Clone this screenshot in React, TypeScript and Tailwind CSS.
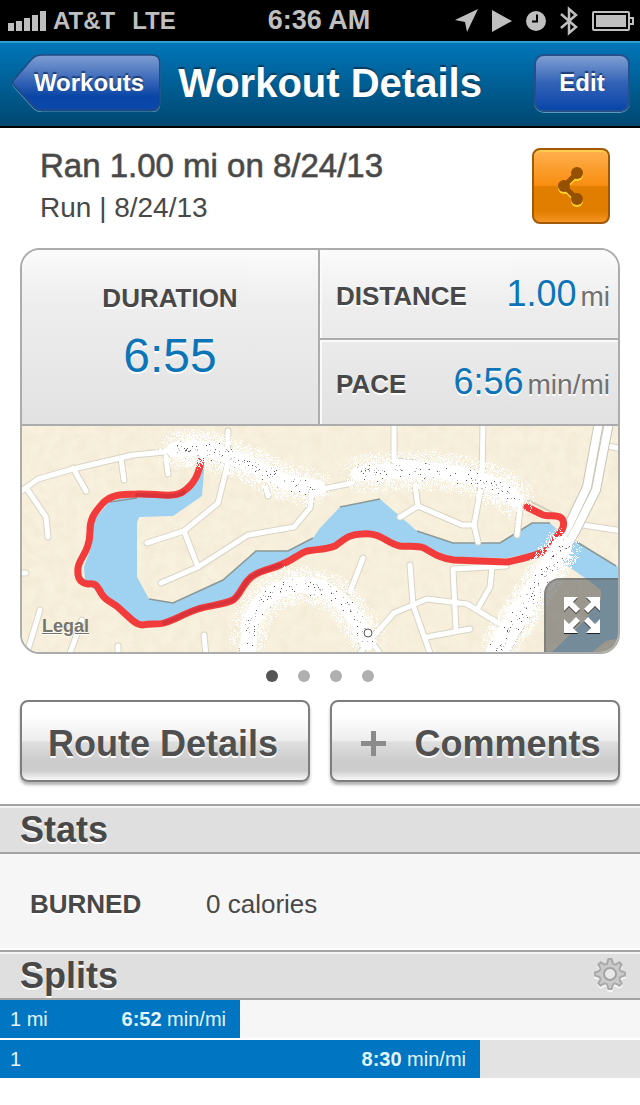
import React from "react";

type Point = [number, number];

function seededRandom(seed: number) {
  let s = seed;
  return () => {
    s = (s * 1664525 + 1013904223) % 4294967296;
    return s / 4294967296;
  };
}

/** Scatters specks around a polyline; density fades with distance, up to `spread`. */
function scatter(points: Point[], spread: number, count: number, seed: number) {
  const rand = seededRandom(seed);
  let d = "";
  for (let i = 0; i < count; i++) {
    const t = rand() * (points.length - 1);
    const k = Math.floor(t);
    const f = t - k;
    const a = points[k];
    const b = points[k + 1];
    const angle = rand() * Math.PI * 2;
    const r = spread * rand();
    const x = Math.round(a[0] + (b[0] - a[0]) * f + Math.cos(angle) * r);
    const y = Math.round(a[1] + (b[1] - a[1]) * f + Math.sin(angle) * r);
    d += `M${x} ${y}h1v1h-1z`;
  }
  return d;
}

const smears: { points: Point[]; core: number; spread: number }[] = [
  { points: [[174, 450], [190, 448], [210, 450], [230, 457], [250, 464], [270, 475], [290, 483], [318, 488]], core: 15, spread: 20 },
  { points: [[358, 474], [376, 472], [398, 471], [420, 470], [442, 471], [464, 475], [486, 481], [504, 490], [516, 500]], core: 15, spread: 21 },
  { points: [[248, 650], [249, 626], [258, 606], [272, 593], [290, 585], [310, 585], [330, 592], [346, 606], [358, 622], [368, 642]], core: 16, spread: 20 },
  { points: [[562, 546], [553, 560], [543, 577], [532, 594], [521, 611], [510, 628], [496, 650]], core: 20, spread: 20 },
];

const roads = [
  "M20 492L38 479L73 469L133 455L165 452",
  "M73 468L86 491",
  "M121 459L124 480",
  "M166 457L168 474",
  "M27 489L46 517L48 537",
  "M228 431L227 467L218 503L184 531L147 543",
  "M184 531L198 567",
  "M161 583L198 567L248 535L294 527L310 508L312 492",
  "M266 488L268 496",
  "M40 610L26 656",
  "M82 620L69 656",
  "M118 646V656",
  "M204 635L206 656",
  "M20 573H26",
  "M394 424V461L417 463",
  "M483 424L482 477L480 493L474 525L478 542",
  "M474 525H462L418 506L400 517",
  "M418 506L415 485",
  "M318 490L352 483",
  "M520 508L517 535",
  "M608 446L622 449",
  "M583 525L622 531",
  "M363 558L350 592",
  "M410 565L413 605L431 656",
  "M382 656L370 640L394 613L427 599L467 604L500 624",
  "M506 566L453 569L456 630",
  "M492 567L490 587L478 608",
  "M427 637L470 629",
  "M370 640L358 656",
];

const highway = ["M599 422L587 487L568 527L490 656", "M609 422L596 490L576 530L502 656"];

const water =
  "M205 459L202 496L173 516L139 517L137 523V577L149 599L173 603L223 580L256 551H288L313 538L320 528L340 507L380 499L417 531L453 543H500L532 523H550L560 532L577 542L620 568V638L606 641L590 654H550L583 622L601 600V590L585 578L562 562L545 550L507 558L453 557L422 547L400 546L380 534H357L335 547L307 551L277 566L255 575L233 600L193 611L163 624L140 625L118 607L105 598L85 582L84 567L91 547L94 520L110 501L137 495L170 496L186 490L199 472Z";

const route =
  "M201 460C199 475 194 484 184 491C174 499 155 493 137 494C118 494 110 496 103 503C93 514 90 520 90 531C90 552 79 558 78 568C77 578 80 583 88 584C97 583 97 586 101 593C106 602 113 602 120 609C130 618 136 625 143 625C150 623 157 625 164 623C175 620 185 613 198 609C210 605 223 605 233 600C242 594 243 580 256 574C265 569 272 569 280 565C292 561 298 554 307 551C317 549 325 550 335 546C345 539 349 534 362 534C381 532 386 543 400 546C409 547 416 545 424 548C434 554 442 559 454 560L507 562C520 559 532 557 543 552C552 549 554 539 559 534C566 526 565 517 556 516C550 515 545 517 541 514L527 507";

function RouteMap() {
  return (
    <svg
      viewBox="22 426 596 226"
      preserveAspectRatio="xMidYMid slice"
      className="block h-[226px] w-full bg-[#f7f0dc]"
      role="img"
      aria-label="Map of the route"
    >
      <defs>
        <filter id="paper" x="0" y="0" width="100%" height="100%">
          <feTurbulence type="fractalNoise" baseFrequency="0.09" numOctaves="3" seed="4" />
          <feColorMatrix values="0 0 0 0 0.6  0 0 0 0 0.5  0 0 0 0 0.3  0 0 0 0.5 -0.16" />
        </filter>
      </defs>
      <rect x="22" y="426" width="596" height="226" fill="#f8f1de" />
      <rect x="22" y="426" width="596" height="226" filter="url(#paper)" opacity="0.4" />
      <path d={water} fill="#9fd2f1" />
      <path
        d="M149 599L173 603L223 580L256 551H288L313 538M340 507L380 499M417 531L453 543H500L532 523H550M577 542L616 566M110 502L137 498"
        fill="none"
        stroke="#8b9896"
        strokeWidth="1.5"
      />
      <g fill="none" strokeLinecap="round" strokeLinejoin="round">
        <g stroke="#d8d4c4" strokeWidth="7">
          {roads.map((d) => <path key={d} d={d} />)}
        </g>
        <g stroke="#ffffff" strokeWidth="5">
          {roads.map((d) => <path key={d} d={d} />)}
        </g>
        <g stroke="#c9c5b8" strokeWidth="10">
          {highway.map((d) => <path key={d} d={d} />)}
        </g>
        <g stroke="#ffffff" strokeWidth="8">
          {highway.map((d) => <path key={d} d={d} />)}
        </g>
        <path d="M528 500L563 518" stroke="#d3cfbf" strokeWidth="2" />
        <path d={route} stroke="#f23c3b" strokeWidth="7" />
        <path d="M137 495C155 494 174 500 184 492M164 623C175 620 185 613 198 609C210 605 223 605 233 600C242 594 243 580 256 574C265 569 272 569 280 565" stroke="#d8323a" strokeWidth="4" />
      </g>
      {smears.map((s, i) => (
        <g key={i}>
          <polyline
            points={s.points.map((p) => p.join(",")).join(" ")}
            fill="none"
            stroke="#ffffff"
            strokeWidth={s.core}
            strokeLinejoin="round"
            strokeLinecap="round"
          />
          <path d={scatter(s.points, s.spread, 6500, 11 + i)} fill="#ffffff" shapeRendering="crispEdges" />
          <path d={scatter(s.points, 10, 45, 71 + i)} fill="#5a5a5a" shapeRendering="crispEdges" />
          <path d={scatter(s.points, 10, 60, 91 + i)} fill="#b5b5b5" shapeRendering="crispEdges" />
        </g>
      ))}
      <circle cx="368" cy="633" r="4" fill="none" stroke="#555555" />
    </svg>
  );
}

function ExpandIcon() {
  const arrow = "0,0 14,0 9,5 16,12 12,16 5,9 0,14";
  const arrows = (
    <>
      <polygon points={arrow} />
      <polygon points={arrow} transform="translate(36 0) scale(-1 1)" />
      <polygon points={arrow} transform="translate(0 36) scale(1 -1)" />
      <polygon points={arrow} transform="translate(36 36) scale(-1 -1)" />
    </>
  );
  return (
    <svg viewBox="0 0 36 38" className="h-[38px] w-9" strokeLinejoin="round" aria-hidden="true">
      <g fill="#222222" transform="translate(0 1)">{arrows}</g>
      <g fill="#ffffff">{arrows}</g>
    </svg>
  );
}

function ShareShape() {
  return (
    <>
      <path d="M20 7L7 20L20 33" fill="none" strokeWidth="5" />
      <circle cx="20" cy="7" r="6" stroke="none" />
      <circle cx="7" cy="20" r="6" stroke="none" />
      <circle cx="20" cy="33" r="6" stroke="none" />
    </>
  );
}

function gearPath() {
  const c = 17;
  let d = "";
  for (let i = 0; i < 8; i++) {
    const base = (i * Math.PI) / 4 - Math.PI / 2;
    const at = (r: number, off: number) =>
      `${(c + r * Math.cos(base + off)).toFixed(2)} ${(c + r * Math.sin(base + off)).toFixed(2)}`;
    d += `${i === 0 ? "M" : "L"}${at(15, -0.11)}L${at(15, 0.11)}L${at(12.2, 0.2)}Q${at(9, 0.3927)} ${at(12.2, 0.5854)}`;
  }
  return d + "Z";
}

function GearIcon() {
  const d = gearPath();
  return (
    <svg viewBox="0 0 34 36" className="h-9 w-[34px]" strokeWidth="2" strokeLinejoin="round" aria-hidden="true">
      <path d={d} transform="translate(0 2)" fill="#f6f6f6" stroke="#f6f6f6" />
      <path d={d} fill="#cacaca" stroke="#a9a9a9" />
      <circle cx="17" cy="17" r="6" fill="#e8e8e8" stroke="#a3a3a3" />
    </svg>
  );
}

function StatusBar() {
  return (
    <div className="grid h-[41px] grid-cols-[1fr_auto_1fr] items-center bg-black pr-[6px] pl-2 text-[#bfbfbf]">
      <div className="flex items-center gap-[7px] text-[24px] font-bold">
        <svg viewBox="0 0 38 20" className="h-5 w-[38px]" fill="currentColor" aria-label="Signal strength">
          <path d="M0 12h6v8H0zM8 10h6v10H8zM16 7h6v13h-6zM24 4h6v16h-6zM32 0h6v20h-6z" />
        </svg>
        <span>AT&amp;T</span>
        <span className="ml-[10px]">LTE</span>
      </div>
      <div className="pr-1 text-[27px] font-bold">6:36 AM</div>
      <div className="flex items-center justify-end gap-[14px]">
        <svg viewBox="0 0 23 23" className="size-[23px]" fill="currentColor" aria-hidden="true">
          <path d="M23 0L12 23L10 13L0 11Z" />
        </svg>
        <svg viewBox="0 0 20 22" className="h-[22px] w-5" fill="currentColor" aria-hidden="true">
          <path d="M0 0L20 11L0 22Z" />
        </svg>
        <svg viewBox="0 0 20 20" className="size-5" aria-hidden="true">
          <circle cx="10" cy="10" r="10" fill="currentColor" />
          <path d="M11 3.500V10.500H6" fill="none" stroke="#000000" strokeWidth="2" />
        </svg>
        <svg viewBox="0 0 18 30" className="h-[30px] w-[18px]" fill="none" stroke="currentColor" strokeWidth="2.500" aria-hidden="true">
          <path d="M1 8L16 21L9 27V3L16 9L1 22" />
        </svg>
        <svg viewBox="0 0 42 20" className="h-5 w-[42px]" aria-label="Battery">
          <rect x="1" y="1" width="36" height="18" rx="1" fill="none" stroke="currentColor" strokeWidth="2" />
          <rect x="4" y="4" width="30" height="12" fill="currentColor" />
          <path d="M38 7h3v6h-3" fill="none" stroke="currentColor" strokeWidth="2" />
        </svg>
      </div>
    </div>
  );
}

function NavBar() {
  return (
    <header className="flex items-center justify-between border-t-2 border-b-2 border-t-[#2aa0cb] border-b-black bg-linear-to-b from-[#0076b8] to-[#004871] px-[10px] pt-[11px] pb-[14px] text-white">
      <button type="button" className="relative h-[58px] w-[152px] pl-[6px] text-[24px] font-bold [text-shadow:0_-2px_1px_#1c3c74]">
        <svg viewBox="0 0 152 59" className="absolute inset-0 h-full w-full" aria-hidden="true">
          <defs>
            <linearGradient id="back" x1="0" y1="0" x2="0" y2="1">
              <stop offset="0" stopColor="#7f9fd2" />
              <stop offset="0.5" stopColor="#3262b6" />
              <stop offset="0.75" stopColor="#0a46a6" />
              <stop offset="1" stopColor="#0a48ac" />
            </linearGradient>
          </defs>
          <path d="M25 2Q28 1 32 1H143Q151 1 151 9V50Q151 58 143 58H32Q26 58 23 55L3 33Q0 30 3 27L21 5Q23 3 25 2Z" fill="none" stroke="#5f97bd" strokeWidth="1" transform="translate(0 1)" />
          <path d="M25 2Q28 1 32 1H143Q151 1 151 9V49Q151 57 143 57H32Q26 57 23 54L3 32Q0 29 3 26L21 5Q23 3 25 2Z" fill="url(#back)" stroke="#234a82" strokeWidth="1.500" />
        </svg>
        <span className="relative">Workouts</span>
      </button>
      <h1 className="text-[40px] leading-[58px] font-bold [text-shadow:0_-2px_1px_#073c60]">Workout Details</h1>
      <button
        type="button"
        className="ml-9 h-[58px] w-[96px] rounded-[10px] border-2 border-[#26508c] bg-linear-to-b from-[#7f9fd2] via-[#3262b6] to-[#0646aa] text-[24px] font-bold shadow-[0_1px_0_#5f97bd] [text-shadow:0_-2px_1px_#1c3c74]"
      >
        Edit
      </button>
    </header>
  );
}

function SectionHeading({ title, children }: { title: string; children?: React.ReactNode }) {
  return (
    <div className="flex h-[50px] items-center justify-between border-y-2 border-[#a3a3a3] bg-[#dfdfdf] pr-[13px] pl-5 shadow-[inset_0_2px_0_#f4f4f4]">
      <h2 className="pt-[2px] text-[36px] leading-[44px] font-bold text-[#484848] [text-shadow:0_2px_0_#ffffff]">{title}</h2>
      {children}
    </div>
  );
}

function Metric({ label, value, unit }: { label: string; value: string; unit: string }) {
  return (
    <div className="flex items-center justify-between pr-2 pl-4 shadow-[inset_2px_2px_0_#fafafa] [text-shadow:0_2px_0_#ffffff]">
      <dt className="mt-1 text-[26px] font-bold">{label}</dt>
      <dd className="flex items-baseline gap-1">
        <span className="text-[36px] text-[#0d74b8]">{value}</span>
        <span className="text-[28px] text-[#707070]">{unit}</span>
      </dd>
    </div>
  );
}

const splits = [
  { label: "1 mi", pace: "6:52", share: 37.5 },
  { label: "1", pace: "8:30", share: 75 },
];

const actionButton =
  "flex h-[82px] items-center justify-center rounded-lg border-2 border-[#7e7e7e] bg-[linear-gradient(to_bottom,#ffffff_0%,#ffffff_18%,#ededed_50%,#dfdfdf_51%,#cccccc_75%,#cccccc_88%,#f2f2f2_98%)] pt-[6px] text-[36px] font-bold text-[#505050] shadow-[0_3px_3px_#b5b5b5] [text-shadow:0_2px_0_#ffffff]";

export default function App() {
  return (
    <div className="min-h-screen bg-white font-['Liberation_Sans',Arial,sans-serif] text-[#484848]">
      <StatusBar />
      <NavBar />
      <main>
        <section className="flex items-start justify-between pt-5 pr-[30px] pl-10">
          <div>
            <h2 className="text-[33px] leading-[36px] [-webkit-text-stroke:1px_#484848a0]">Ran 1.00 mi on 8/24/13</h2>
            <p className="mt-2 text-[28px] leading-[32px]">Run | 8/24/13</p>
          </div>
          <button
            type="button"
            aria-label="Share"
            className="flex h-[76px] w-[78px] items-center justify-center rounded-lg border-2 border-[#a05a08] bg-[linear-gradient(to_bottom,#ffb050_0%,#f88e10_49%,#e17e00_51%,#e17e00_85%,#f59422_100%)] pt-[2px] shadow-[inset_0_2px_0_#ffca4c]"
          >
            <svg viewBox="0 0 28 42" className="h-[42px] w-7" aria-hidden="true">
              <g transform="translate(0 2)" fill="#ffd22e" stroke="#ffd22e"><ShareShape /></g>
              <g fill="#955000" stroke="#955000"><ShareShape /></g>
            </svg>
          </button>
        </section>

        <section className="relative mx-5 mt-6 overflow-hidden rounded-[20px] border-2 border-[#acacac]">
          <dl className="grid h-44 grid-cols-2 border-b-2 border-[#acacac] bg-[linear-gradient(to_bottom,#fbfbfb,#eeeeee_30%,#e2e2e2)]">
            <div className="flex flex-col items-center border-r-2 border-[#acacac] pt-8 [text-shadow:0_2px_0_#ffffff]">
              <dt className="text-[26px] leading-8 font-bold">DURATION</dt>
              <dd className="mt-4 text-[48px] leading-[52px] text-[#0d74b8]">6:55</dd>
            </div>
            <div className="grid grid-rows-[90px_1fr] divide-y-2 divide-[#acacac]">
              <Metric label="DISTANCE" value="1.00" unit="mi" />
              <Metric label="PACE" value="6:56" unit="min/mi" />
            </div>
          </dl>
          <RouteMap />
          <a href="#legal" className="absolute bottom-[14px] left-5 text-[18px] leading-6 font-bold text-[#77756b] underline [text-shadow:0_1px_0_#ffffff]">
            Legal
          </a>
          <button
            type="button"
            aria-label="Expand map"
            className="absolute right-0 bottom-0 flex h-[74px] w-[74px] items-center justify-center rounded-tl-2xl border-t-2 border-l-2 border-[#5c5c5c]/40 bg-[#505050]/55"
          >
            <ExpandIcon />
          </button>
        </section>

        <nav className="flex justify-center gap-5 py-4" aria-label="Pages">
          <button type="button" aria-label="Page 1" className="size-3 rounded-full bg-[#555555]" />
          <button type="button" aria-label="Page 2" className="size-3 rounded-full bg-[#b0b0b0]" />
          <button type="button" aria-label="Page 3" className="size-3 rounded-full bg-[#b0b0b0]" />
          <button type="button" aria-label="Page 4" className="size-3 rounded-full bg-[#b0b0b0]" />
        </nav>

        <div className="mx-5 mt-[2px] mb-[22px] grid grid-cols-2 gap-5">
          <button type="button" className={`${actionButton} pr-1`}>Route Details</button>
          <button type="button" className={`${actionButton} gap-7 pl-3`}>
            <svg viewBox="0 0 25 25" className="mb-[2px] size-[25px]" aria-hidden="true">
              <path d="M12.500 0V25M0 12.500H25" stroke="#8b8b8b" strokeWidth="5" />
            </svg>
            <span>Comments</span>
          </button>
        </div>

        <SectionHeading title="Stats" />
        <dl className="flex h-24 items-center border-b-2 border-white bg-[#f6f6f6] pt-[6px] pl-[30px] text-[26px]">
          <dt className="w-44 font-bold [text-shadow:0_2px_0_#ffffff]">BURNED</dt>
          <dd>0 calories</dd>
        </dl>

        <SectionHeading title="Splits">
          <button type="button" aria-label="Split settings">
            <GearIcon />
          </button>
        </SectionHeading>
        <ul className="flex flex-col gap-[2px] text-[20px] text-[#e4f5ff]">
          {splits.map((split) => (
            <li key={split.label} className="h-[38px] bg-[#f6f6f6] even:bg-[#e3e3e3]">
              <div
                className="flex h-full items-center justify-between bg-[#0075c1] pr-[14px] pl-[10px]"
                style={{ width: `${split.share}%` }}
              >
                <span>{split.label}</span>
                <span>
                  <b>{split.pace}</b> min/mi
                </span>
              </div>
            </li>
          ))}
        </ul>
      </main>
    </div>
  );
}
